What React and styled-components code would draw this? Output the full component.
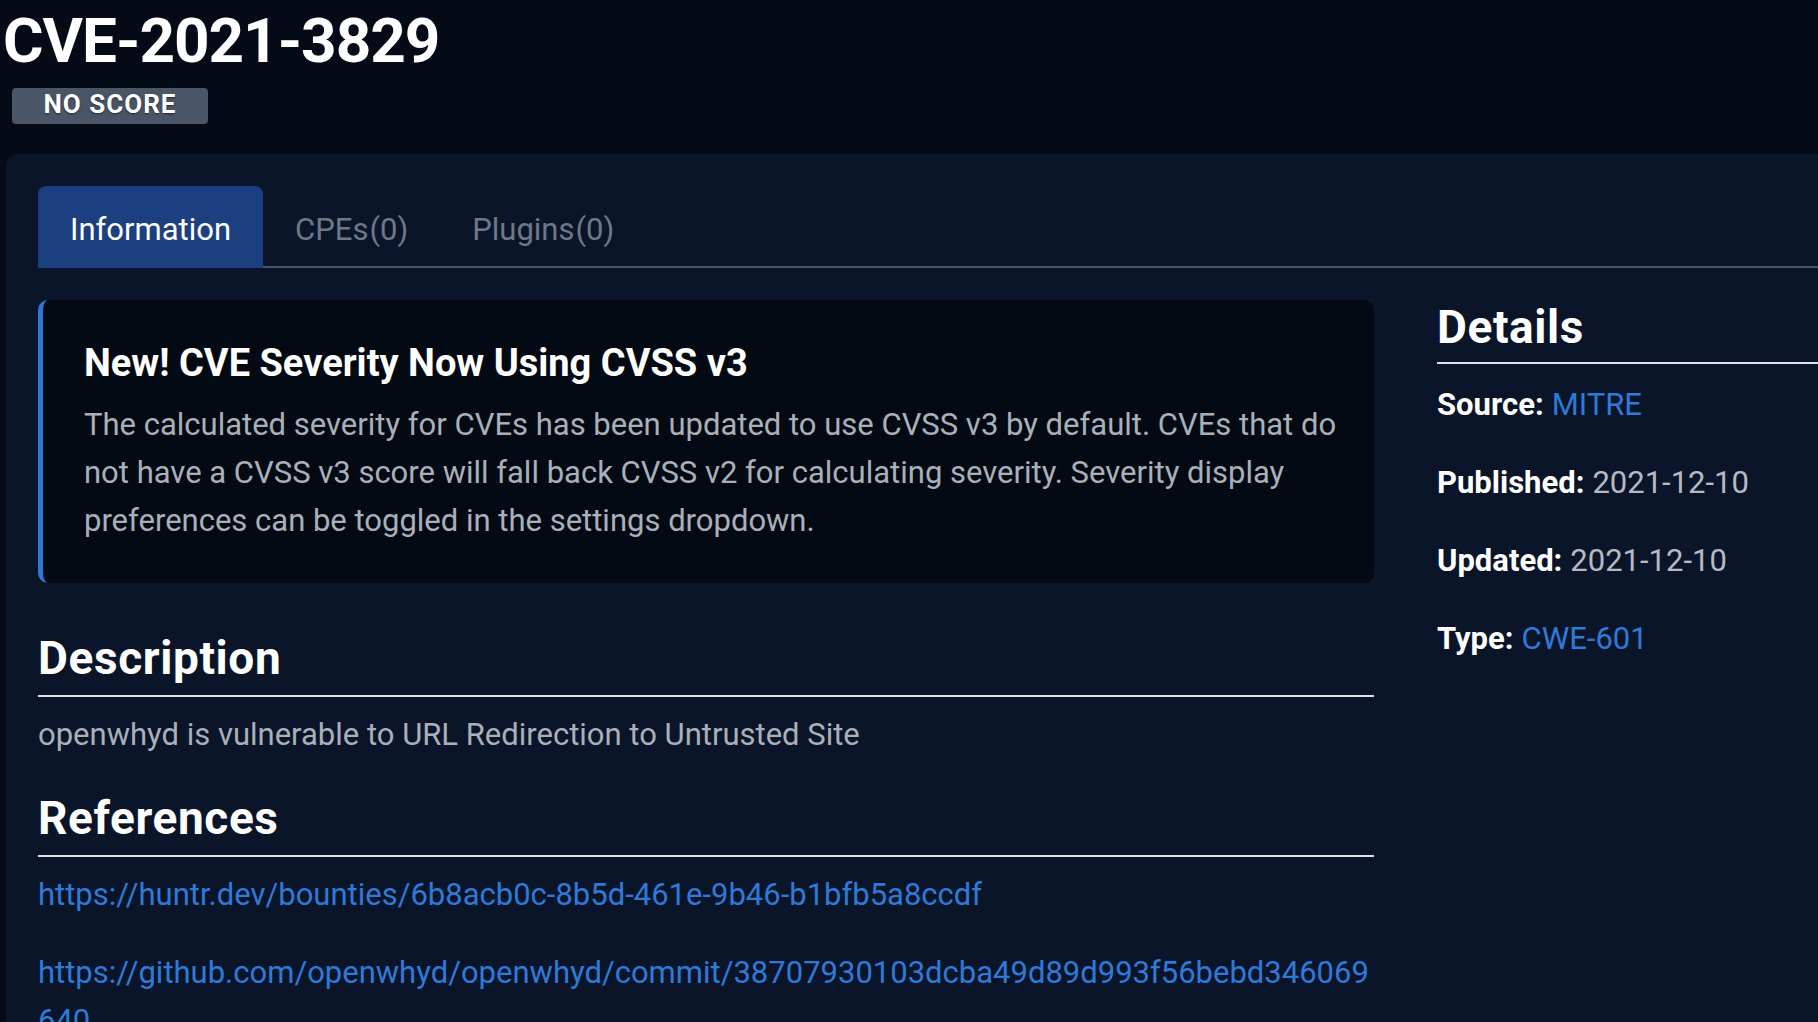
import React from "react";
import styled, { createGlobalStyle } from "styled-components";

const GlobalStyle = createGlobalStyle`
  html, body {
    margin: 0;
    padding: 0;
    background: #050b16;
    overflow: hidden;
  }
  body {
    font-family: "Roboto", "Liberation Sans", sans-serif;
    color: #ffffff;
  }
  * { box-sizing: border-box; }
`;

const Page = styled.div`
  width: 1818px;
  height: 1022px;
  overflow: hidden;
  padding-top: 5px;
`;

const Header = styled.header`
  display: flex;
  flex-direction: column;
  align-items: flex-start;
`;

const Title = styled.h1`
  margin: 0 0 0 3px;
  font-size: 62px;
  line-height: 72px;
  font-weight: 700;
  color: #ffffff;
  letter-spacing: -1px;
`;

const ScoreBadge = styled.span`
  display: flex;
  align-items: center;
  justify-content: center;
  margin: 11px 0 0 12px;
  width: 196px;
  height: 36px;
  padding-bottom: 4px;
  border-radius: 4px;
  background: #4a5568;
  color: #ffffff;
  font-size: 26px;
  line-height: 32px;
  font-weight: 700;
  letter-spacing: 1px;
  text-shadow: 0 1px 2px rgba(0, 0, 0, 0.55);
`;

const Panel = styled.main`
  margin: 30px 0 0 6px;
  width: 1960px;
  min-height: 1000px;
  padding: 32px;
  background: #0a1529;
  border-radius: 12px;
`;

const TabList = styled.nav`
  display: flex;
  align-items: flex-start;
  border-bottom: 2px solid #4b5466;
`;

const Tab = styled.button`
  margin: 0 0 -2px 0;
  padding: 8px 32px 2px;
  border: none;
  border-radius: 8px 8px 0 0;
  background: ${(p) => (p.$active ? "#1c3f80" : "transparent")};
  color: ${(p) => (p.$active ? "#ffffff" : "#6f7887")};
  font-family: inherit;
  font-size: 31px;
  line-height: 72px;
  font-weight: 400;
  cursor: pointer;
`;

const Count = styled.span`
  margin-left: 1px;
`;

const Content = styled.div`
  display: grid;
  grid-template-columns: 1336px 1fr;
  column-gap: 63px;
  margin-top: 32px;
`;

const MainColumn = styled.div`
  display: flex;
  flex-direction: column;
`;

const Notice = styled.section`
  padding: 40px 28px 38px 41px;
  background: #040a14;
  border-left: 5px solid #2e78d6;
  border-radius: 10px;
`;

const NoticeTitle = styled.h3`
  margin: 0 0 15px;
  font-size: 38px;
  line-height: 46px;
  font-weight: 700;
  color: #ffffff;
`;

const BodyText = styled.p`
  margin: 0;
  font-size: 31px;
  line-height: 48px;
  font-weight: 400;
  color: #aab0ba;
`;

const Section = styled.section`
  margin-top: ${(p) => p.$top}px;
`;

const SectionHeading = styled.h2`
  margin: 0;
  padding-bottom: ${(p) => p.$pad ?? 10}px;
  border-bottom: 2px solid #dfe2e8;
  font-size: 46px;
  line-height: 54px;
  font-weight: 700;
  letter-spacing: 0.6px;
  color: #ffffff;
`;

const Description = styled(BodyText)`
  margin-top: 14px;
`;

const RefList = styled.div`
  display: flex;
  flex-direction: column;
  gap: 30px;
  margin-top: 14px;
`;

const RefLink = styled.a`
  display: block;
  font-size: 31px;
  line-height: 48px;
  color: #2f7ad8;
  text-decoration: none;
  overflow-wrap: anywhere;
  word-break: break-all;
`;

const Aside = styled.aside`
  display: flex;
  flex-direction: column;
`;

const DetailList = styled.dl`
  display: flex;
  flex-direction: column;
  gap: 30px;
  margin: 17px 0 0;
`;

const DetailRow = styled.div`
  display: flex;
  gap: 8px;
  font-size: 31px;
  line-height: 48px;
`;

const DetailLabel = styled.dt`
  font-weight: 700;
  color: #ffffff;
`;

const DetailValue = styled.dd`
  margin: 0;
  font-weight: 400;
  color: ${(p) => (p.$link ? "#2f7ad8" : "#b5bac2")};
`;

const details = [
  { label: "Source:", value: "MITRE", link: true },
  { label: "Published:", value: "2021-12-10" },
  { label: "Updated:", value: "2021-12-10" },
  { label: "Type:", value: "CWE-601", link: true },
];

const references = [
  "https://huntr.dev/bounties/6b8acb0c-8b5d-461e-9b46-b1bfb5a8ccdf",
  "https://github.com/openwhyd/openwhyd/commit/38707930103dcba49d89d993f56bebd346069640",
];

export default function App() {
  return (
    <>
      <GlobalStyle />
      <Page>
        <Header>
          <Title>CVE-2021-3829</Title>
          <ScoreBadge>NO SCORE</ScoreBadge>
        </Header>
        <Panel>
          <TabList>
            <Tab $active>Information</Tab>
            <Tab>
              CPEs<Count>(0)</Count>
            </Tab>
            <Tab>
              Plugins<Count>(0)</Count>
            </Tab>
          </TabList>
          <Content>
            <MainColumn>
              <Notice>
                <NoticeTitle>New! CVE Severity Now Using CVSS v3</NoticeTitle>
                <BodyText>
                  The calculated severity for CVEs has been updated to use CVSS v3 by default. CVEs that do
                  not have a CVSS v3 score will fall back CVSS v2 for calculating severity. Severity display
                  preferences can be toggled in the settings dropdown.
                </BodyText>
              </Notice>
              <Section $top={48}>
                <SectionHeading>Description</SectionHeading>
                <Description>openwhyd is vulnerable to URL Redirection to Untrusted Site</Description>
              </Section>
              <Section $top={32}>
                <SectionHeading>References</SectionHeading>
                <RefList>
                  {references.map((href) => (
                    <RefLink key={href} href={href}>
                      {href}
                    </RefLink>
                  ))}
                </RefList>
              </Section>
            </MainColumn>
            <Aside>
              <SectionHeading $pad={8}>Details</SectionHeading>
              <DetailList>
                {details.map((d) => (
                  <DetailRow key={d.label}>
                    <DetailLabel>{d.label}</DetailLabel>
                    <DetailValue $link={d.link}>{d.value}</DetailValue>
                  </DetailRow>
                ))}
              </DetailList>
            </Aside>
          </Content>
        </Panel>
      </Page>
    </>
  );
}
